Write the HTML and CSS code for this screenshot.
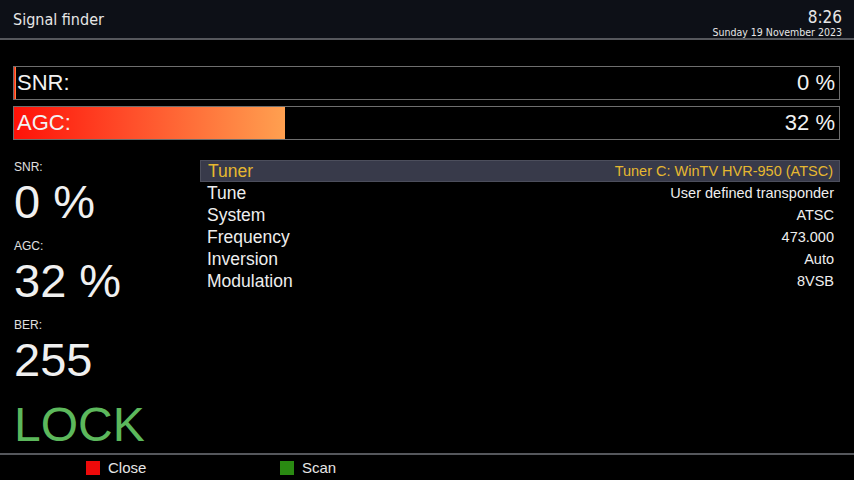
FILE: index.html
```html
<!DOCTYPE html>
<html lang="en">
<head>
  <meta charset="UTF-8">
  <title>Signal finder</title>
  <link rel="stylesheet" href="styles.css">
</head>
<body>
  <div class="header">
    <div class="title">Signal finder</div>
    <div class="clock">
      <div class="time">8:26</div>
      <div class="date">Sunday 19 November 2023</div>
    </div>
  </div>

  <div class="bars">
    <div class="bar">
      <div class="fill" style="width: 0.3%"></div>
      <span class="bar-label">SNR:</span>
      <span class="bar-value">0 %</span>
    </div>
    <div class="bar">
      <div class="fill" style="width: 32.8%"></div>
      <span class="bar-label">AGC:</span>
      <span class="bar-value">32 %</span>
    </div>
  </div>

  <div class="main">
    <div class="stats">
      <div class="stat-label">SNR:</div>
      <div class="stat-value">0 %</div>
      <div class="stat-label">AGC:</div>
      <div class="stat-value">32 %</div>
      <div class="stat-label">BER:</div>
      <div class="stat-value">255</div>
      <div class="lock">LOCK</div>
    </div>

    <div class="list">
      <div class="row selected"><span class="key">Tuner</span><span class="val">Tuner C: WinTV HVR-950 (ATSC)</span></div>
      <div class="row"><span class="key">Tune</span><span class="val">User defined transponder</span></div>
      <div class="row"><span class="key">System</span><span class="val">ATSC</span></div>
      <div class="row"><span class="key">Frequency</span><span class="val">473.000</span></div>
      <div class="row"><span class="key">Inversion</span><span class="val">Auto</span></div>
      <div class="row"><span class="key">Modulation</span><span class="val">8VSB</span></div>
    </div>
  </div>

  <div class="footer">
    <div class="key-btn"><span class="sq red"></span>Close</div>
    <div class="key-btn"><span class="sq green"></span>Scan</div>
  </div>
</body>
</html>
```

FILE: styles.css
```css
body {
  margin: 0;
  width: 854px;
  height: 480px;
  background: #000;
  color: #eee;
  font-family: 'Liberation Sans', Arial, sans-serif;
  overflow: hidden;
  display: flex;
  flex-direction: column;
}
.header {
  height: 38px;
  background: #0d1017;
  border-bottom: 2px solid #55575c;
  display: flex;
  justify-content: space-between;
  align-items: flex-start;
  padding: 0 12px 0 13px;
  font-family: 'Liberation Sans Narrow', 'DejaVu Sans Condensed', Roboto, sans-serif;
}
.title {
  font-size: 16px;
  margin-top: 10px;
  color: #e6e6e6;
}
.clock {
  text-align: right;
  color: #e6e6e6;
}
.time {
  font-size: 17px;
  margin-top: 9px;
  line-height: 16px;
}
.date {
  font-size: 10.5px;
  line-height: 12px;
  margin-top: 1px;
}
.bars {
  padding: 26px 14px 0 13px;
  display: flex;
  flex-direction: column;
  gap: 6px;
}
.bar {
  position: relative;
  height: 32px;
  border: 1px solid #6e6e6e;
  display: flex;
  justify-content: space-between;
  align-items: center;
  padding: 0 4px 0 3px;
  font-size: 22px;
}
.fill {
  position: absolute;
  left: 0;
  top: 0;
  bottom: 0;
  min-width: 1px;
  background: linear-gradient(to right, #ff1208, #ff4a28 40%, #ffa050);
}
.bar-label, .bar-value {
  position: relative;
  color: #f2f2f2;
}
.main {
  flex: 1;
  display: flex;
  padding: 0 14px 0 14px;
}
.stats {
  width: 186px;
  padding-top: 20px;
}
.stat-label {
  font-size: 12px;
  line-height: 14px;
  color: #e0e0e0;
}
.stat-value {
  font-size: 47px;
  line-height: 55px;
  color: #f0f0f0;
  margin-bottom: 10px;
}
.lock {
  font-size: 48px;
  line-height: 56px;
  color: #5cb85c;
  margin-top: 1px;
}
.list {
  flex: 1;
  padding-top: 20px;
}
.row {
  height: 22px;
  display: flex;
  justify-content: space-between;
  align-items: center;
  padding: 0 6px 0 7px;
  box-sizing: border-box;
}
.row.selected {
  background: #383a4a;
  border: 1px solid #4c4e5c;
  color: #e6b830;
}
.key {
  font-size: 17.5px;
}
.val {
  font-size: 14.5px;
}
.footer {
  height: 25px;
  border-top: 2px solid #55575c;
  display: flex;
  align-items: center;
  padding-left: 86px;
  font-size: 15px;
}
.key-btn {
  display: flex;
  align-items: center;
  width: 194px;
  color: #e6e6e6;
}
.sq {
  width: 14px;
  height: 14px;
  margin-right: 8px;
}
.red {
  background: #ee0a0a;
}
.green {
  background: #2a8a12;
}
```
